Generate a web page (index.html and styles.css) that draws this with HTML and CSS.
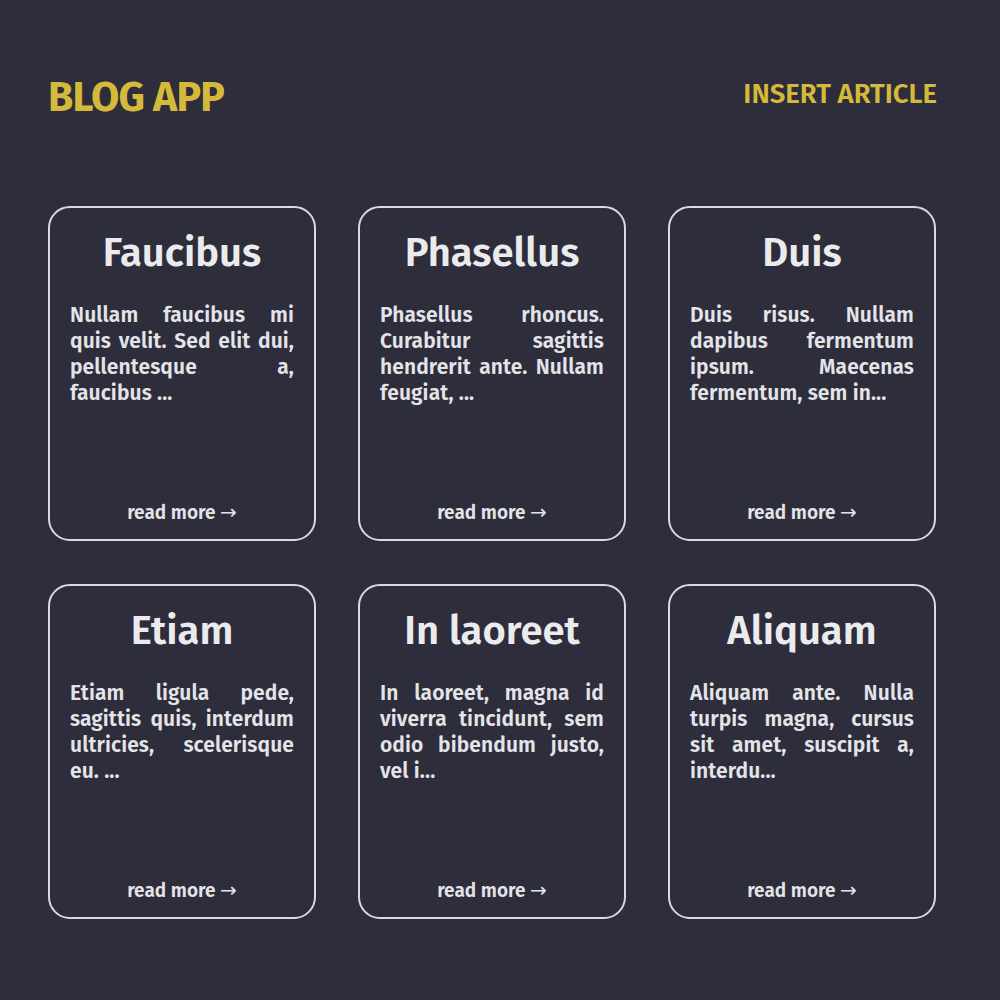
FILE: index.html
```html
<!DOCTYPE html>
<html lang="en">
<head>
<meta charset="utf-8">
<title>Blog App</title>
<link rel="stylesheet" href="styles.css">
</head>
<body>
<div class="page">
  <header class="header">
    <h1 class="brand">BLOG APP</h1>
    <a class="insert" href="#">INSERT ARTICLE</a>
  </header>
  <main class="grid">
    <article class="card">
      <h2 class="card-title">Faucibus</h2>
      <p class="card-text">Nullam faucibus mi quis velit. Sed elit dui, pellentesque a, faucibus ...</p>
      <a class="more" href="#">read more <span class="arrow">→</span></a>
    </article>
    <article class="card">
      <h2 class="card-title">Phasellus</h2>
      <p class="card-text">Phasellus rhoncus. Curabitur sagittis hendrerit ante. Nullam feugiat, ...</p>
      <a class="more" href="#">read more <span class="arrow">→</span></a>
    </article>
    <article class="card">
      <h2 class="card-title">Duis</h2>
      <p class="card-text">Duis risus. Nullam dapibus fermentum ipsum. Maecenas fermentum, sem in...</p>
      <a class="more" href="#">read more <span class="arrow">→</span></a>
    </article>
    <article class="card">
      <h2 class="card-title">Etiam</h2>
      <p class="card-text">Etiam ligula pede, sagittis quis, interdum ultricies, scelerisque eu. ...</p>
      <a class="more" href="#">read more <span class="arrow">→</span></a>
    </article>
    <article class="card">
      <h2 class="card-title">In laoreet</h2>
      <p class="card-text">In laoreet, magna id viverra tincidunt, sem odio bibendum justo, vel i...</p>
      <a class="more" href="#">read more <span class="arrow">→</span></a>
    </article>
    <article class="card">
      <h2 class="card-title">Aliquam</h2>
      <p class="card-text">Aliquam ante. Nulla turpis magna, cursus sit amet, suscipit a, interdu...</p>
      <a class="more" href="#">read more <span class="arrow">→</span></a>
    </article>
  </main>
</div>
</body>
</html>
```

FILE: styles.css
```css
* { box-sizing: border-box; }

html, body {
  margin: 0;
  padding: 0;
  background: #2e2d3b;
}

body {
  font-family: "Fira Sans", "Open Sans", sans-serif;
  color: #e4e4e8;
  min-height: 1000px;
}

.page {
  padding: 73px 63px 0 48px;
}

.header {
  display: flex;
  justify-content: space-between;
  align-items: flex-start;
}

.brand {
  margin: 0;
  font-size: 41px;
  line-height: 50px;
  font-weight: 700;
  letter-spacing: -0.8px;
  color: #d5b93a;
}

.insert {
  margin-top: 5px;
  font-size: 27.5px;
  line-height: 32px;
  font-weight: 600;
  color: #d5b93a;
  text-decoration: none;
}

.grid {
  margin-top: 83px;
  width: 888px;
  display: grid;
  grid-template-columns: repeat(3, 268px);
  column-gap: 42px;
  row-gap: 43px;
}

.card {
  height: 335px;
  border: 2px solid #d9d9de;
  border-radius: 22px;
  padding: 0 20px 13px;
  display: flex;
  flex-direction: column;
}

.card-title {
  margin: 21px 0 0;
  text-align: center;
  font-size: 40px;
  line-height: 48px;
  font-weight: 600;
  color: #ebebee;
}

.card-text {
  margin: 25px 0 0;
  font-size: 21px;
  line-height: 26px;
  font-weight: 600;
  letter-spacing: 0.1px;
  text-align: justify;
}

.more {
  margin-top: auto;
  text-align: center;
  font-size: 19px;
  line-height: 26px;
  font-weight: 600;
  color: #e4e4e8;
  text-decoration: none;
}

.arrow {
  font-family: "DejaVu Sans", sans-serif;
  font-weight: 400;
  font-size: 20px;
}
```
